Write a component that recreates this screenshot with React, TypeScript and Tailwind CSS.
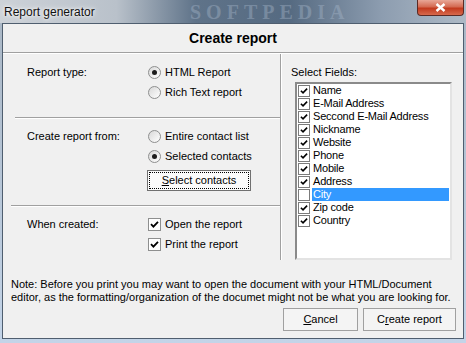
import React from "react";

const fields = [
  { name: "Name", on: true },
  { name: "E-Mail Address", on: true },
  { name: "Seccond E-Mail Address", on: true },
  { name: "Nickname", on: true },
  { name: "Website", on: true },
  { name: "Phone", on: true },
  { name: "Mobile", on: true },
  { name: "Address", on: true },
  { name: "City", on: false, selected: true },
  { name: "Zip code", on: true },
  { name: "Country", on: true },
];

function Tick({ size = 9 }: { size?: number }) {
  return (
    <svg width={size} height={size} viewBox="0 0 9 9">
      <path d="M1 4.2 L3.4 6.6 L8 1.8" stroke="#000" strokeWidth="1.8" fill="none" />
    </svg>
  );
}

function Radio({ checked, label }: { checked?: boolean; label: string }) {
  return (
    <div className="flex items-center h-[20px]">
      <span className="w-[13px] h-[13px] rounded-full border border-[#8e8f8f] bg-gradient-to-br from-[#d8d8d8] to-[#ffffff] flex items-center justify-center">
        {checked && <span className="w-[5px] h-[5px] rounded-full bg-[#1c1c1c]" />}
      </span>
      <span className="ml-[4px]">{label}</span>
    </div>
  );
}

function Check({ label }: { label: string }) {
  return (
    <div className="flex items-center h-[20px]">
      <span className="w-[13px] h-[13px] border border-[#8e8f8f] bg-white flex items-center justify-center">
        <Tick />
      </span>
      <span className="ml-[4px]">{label}</span>
    </div>
  );
}

function HSep({ indent }: { indent: string }) {
  return <div className={`${indent} h-[2px] border-t border-[#a0a0a0] border-b border-b-white`} />;
}

export default function App() {
  return (
    <div
      className="w-[466px] h-[343px] flex flex-col bg-gradient-to-b from-[#a9b6c4] to-[#c3d4e8] text-[11px] text-black overflow-hidden"
      style={{ fontFamily: '"Liberation Sans", Arial, sans-serif' }}
    >
      {/* title bar */}
      <div className="relative h-[23px] shrink-0 flex items-center bg-[linear-gradient(to_right,#cdd2d8_0%,#b9c1ca_25%,#5f7389_42%,#556a81_62%,#8d9db0_82%,#aebac6_100%)]">
        <span className="pl-[4px] text-[12px] text-[#111] [text-shadow:0_0_6px_#ffffff,0_0_3px_#ffffff]">
          Report generator
        </span>
        <span
          className="absolute left-[190px] top-[1px] leading-[22px] text-[20px] font-bold tracking-[5px] text-[#a7b7ca] opacity-40"
          style={{ fontFamily: '"Liberation Serif", serif' }}
        >
          SOFTPEDIA
        </span>
        <div className="absolute top-0 right-[2px] w-[47px] h-[16px] rounded-b-[4px] border border-t-0 border-[#5b2a24] bg-[linear-gradient(to_bottom,#e8a797_0%,#d46a52_45%,#c23a1e_55%,#d7694c_100%)] flex items-center justify-center">
          <svg width="11" height="9" viewBox="0 0 11 9">
            <path d="M1.5 1 L9.5 8 M9.5 1 L1.5 8" stroke="#fff" strokeWidth="2.4" />
          </svg>
        </div>
      </div>

      {/* client area */}
      <div className="mx-[2px] mb-[4px] flex-1 flex flex-col border border-[#4f5e6f] bg-[#f0f0f0]">
        <div className="h-[28px] flex items-center justify-center text-[14px] font-bold">Create report</div>
        <HSep indent="" />

        <div className="flex h-[206px]">
          {/* left */}
          <div className="w-[277px] flex flex-col">
            <div className="h-[63px] flex pt-[8px]">
              <div className="w-[145px] pl-[24px] h-[20px] flex items-center">Report type:</div>
              <div className="flex flex-col">
                <Radio checked label="HTML Report" />
                <Radio label="Rich Text report" />
              </div>
            </div>
            <HSep indent="ml-[12px]" />
            <div className="h-[86px] flex pt-[7px]">
              <div className="w-[145px] pl-[24px] h-[20px] flex items-center">Create report from:</div>
              <div className="flex flex-col">
                <Radio label="Entire contact list" />
                <Radio checked label="Selected contacts" />
                <button className="mt-[4px] ml-[-1px] w-[104px] h-[21px] bg-[#fbfbfb] border border-[#707070] flex items-center justify-center">
                  <span className="w-[100px] h-[17px] border border-dotted border-black flex items-center justify-center">
                    <span className="underline">S</span>elect contacts
                  </span>
                </button>
              </div>
            </div>
            <HSep indent="ml-[8px]" />
            <div className="flex-1 flex pt-[7px]">
              <div className="w-[145px] pl-[24px] h-[20px] flex items-center">When created:</div>
              <div className="flex flex-col">
                <Check label="Open the report" />
                <Check label="Print the report" />
              </div>
            </div>
          </div>

          <div className="w-[2px] border-l border-[#a0a0a0] border-r border-r-white" />

          {/* right */}
          <div className="flex-1 flex flex-col pl-[9px] pt-[11px]">
            <div className="h-[14px] flex items-center">Select Fields:</div>
            <div className="mt-[3px] ml-[4px] w-[157px] h-[178px] border-2 border-t-[#8a8a8a] border-l-[#8a8a8a] border-b-[#e3e3e3] border-r-[#e3e3e3] bg-white flex flex-col">
              {fields.map((f) => (
                <div key={f.name} className="h-[13px] flex items-center">
                  <span className="ml-[1px] w-[12px] h-[12px] border border-[#7b7b7b] bg-white flex items-center justify-center">
                    {f.on && <Tick size={8} />}
                  </span>
                  <span
                    className={`ml-[2px] h-[13px] flex items-center pl-[1px] tracking-[-0.2px] ${
                      f.selected ? "flex-1 mr-[1px] bg-[#3399ff] text-white" : ""
                    }`}
                  >
                    {f.name}
                  </span>
                </div>
              ))}
            </div>
          </div>
        </div>

        <div className="px-[8px] pt-[18px] leading-[13px]">
          Note: Before you print you may want to open the document with your HTML/Document
          <br />
          editor, as the formatting/organization of the documet might not be what you are looking for.
        </div>

        <div className="flex justify-end gap-[5px] pr-[7px] pt-[4px]">
          <button className="w-[75px] h-[23px] bg-[#f4f4f4] border border-[#a0a0a0] flex items-center justify-center">
            <span>
              <span className="underline">C</span>ancel
            </span>
          </button>
          <button className="w-[93px] h-[23px] bg-[#f4f4f4] border border-[#a0a0a0] flex items-center justify-center">
            <span>
              C<span className="underline">r</span>eate report
            </span>
          </button>
        </div>
      </div>
    </div>
  );
}
